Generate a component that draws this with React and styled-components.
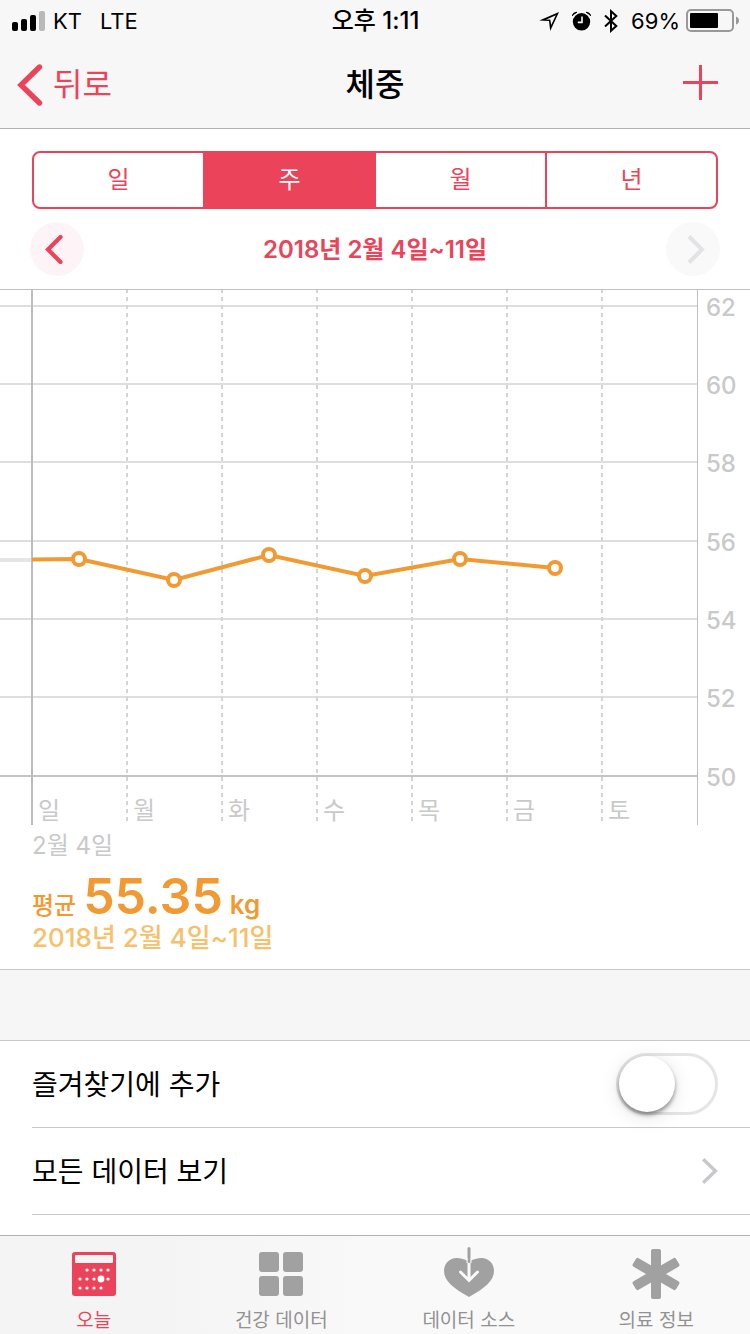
import React, { useState } from "react";
import styled, { createGlobalStyle, css } from "styled-components";

const PINK = "#eb445a";
const ORANGE = "#f19a33";
const ORANGE_LIGHT = "#f6c06c";
const GRAY = "#a1a1a1";
const LABEL = "#c9c9c9";
const LINE = "#c8c7cc";

const GlobalStyle = createGlobalStyle`
  *, *::before, *::after { box-sizing: border-box; }
  body {
    margin: 0;
    background: #fff;
    color: #000;
    font-family: Inter, "Noto Sans CJK KR", sans-serif;
  }
  button { font-family: inherit; border: 0; padding: 0; background: none; cursor: pointer; }
  svg { display: block; flex: none; }
`;

const Screen = styled.div`
  display: flex;
  flex-direction: column;
  min-height: 100vh;
`;

const Header = styled.header`
  background: #f7f7f7;
  border-bottom: 1px solid #b2b2b2;
`;

const StatusBar = styled.div`
  display: grid;
  grid-template-columns: 1fr auto 1fr;
  align-items: center;
  height: 41px;
  padding: 0 11px 0 12px;
  font-size: 22px;
  line-height: 32px;
`;

const StatusGroup = styled.div`
  display: flex;
  align-items: center;
  justify-content: ${(p) => (p.$end ? "flex-end" : "flex-start")};
  gap: ${(p) => (p.$end ? "13px" : "8px")};
`;

const Network = styled.span`
  margin-left: 10px;
`;

const BatteryStatus = styled.span`
  display: flex;
  align-items: center;
  gap: 6px;
`;

const Clock = styled.time`
  font-weight: 500;
  font-size: 24px;
`;

const NavBar = styled.nav`
  display: grid;
  grid-template-columns: 1fr auto 1fr;
  align-items: center;
  height: 87px;
  padding: 0 17px;
`;

const BackButton = styled.button`
  display: flex;
  align-items: center;
  justify-self: start;
  gap: 10px;
  color: ${PINK};
  font-size: 32px;
  line-height: 40px;
`;

const AddButton = styled.button`
  justify-self: end;
  padding: 0 15px 4px;
  color: ${PINK};
`;

const Title = styled.h1`
  margin: 0;
  font-size: 32px;
  font-weight: 500;
  line-height: 40px;
`;

const Main = styled.main`
  flex: 1;
`;

const Controls = styled.section`
  padding: 22px 30px 13px;
`;

const Segmented = styled.div`
  display: flex;
  height: 58px;
  margin: 0 2px 13px;
  border: 2px solid ${PINK};
  border-radius: 8px;
  overflow: hidden;
`;

const Segment = styled.button`
  flex: 1;
  color: ${PINK};
  font-size: 24px;
  line-height: 32px;
  & + & { border-left: 2px solid ${PINK}; }
  ${(p) => p.$active && css`
    background: ${PINK};
    color: #fff;
  `}
`;

const DateNav = styled.div`
  display: flex;
  align-items: center;
  justify-content: space-between;
`;

const RoundButton = styled.button`
  display: flex;
  align-items: center;
  justify-content: center;
  width: 54px;
  height: 54px;
  border-radius: 50%;
  background: ${(p) => (p.disabled ? "#f9f9f9" : "#fef4f7")};
  color: ${(p) => (p.disabled ? "#e3e3e6" : PINK)};
`;

const DateRange = styled.h2`
  margin: 0;
  padding-top: 2px;
  color: ${PINK};
  font-size: 24px;
  font-weight: 600;
  line-height: 32px;
`;

const Plot = styled.svg`
  width: 100%;
  height: auto;
  font-size: 24px;
`;

const AxisLabel = styled.text`
  fill: ${LABEL};
  font-weight: ${(p) => (p.$value ? 500 : 400)};
`;

const Summary = styled.section`
  padding: 5px 32px 15px;
  border-bottom: 1px solid ${LINE};
`;

const StartDate = styled.p`
  margin: 0;
  color: ${LABEL};
  font-size: 24px;
  line-height: 32px;
`;

const Average = styled.p`
  display: flex;
  align-items: baseline;
  gap: 7px;
  margin: 8px 0 0;
  color: ${ORANGE};
  font-size: 24px;
  font-weight: 500;
  line-height: 32px;
`;

const AverageValue = styled.span`
  font-size: 50px;
  font-weight: 600;
  line-height: 52px;
`;

const Unit = styled.span`
  font-size: 26px;
  font-weight: 600;
`;

const AverageRange = styled.p`
  margin: 0;
  color: ${ORANGE_LIGHT};
  font-size: 26px;
  font-weight: 500;
  line-height: 32px;
`;

const SectionGap = styled.div`
  height: 71px;
  border-bottom: 1px solid ${LINE};
  background: #f6f6f6;
`;

const Options = styled.ul`
  margin: 0;
  padding: 0 0 0 32px;
  list-style: none;
`;

const Option = styled.li`
  border-bottom: 1px solid ${LINE};
  font-size: 28px;
  line-height: 40px;
`;

const rowLayout = css`
  display: flex;
  align-items: center;
  justify-content: space-between;
  height: 86px;
  padding-right: 32px;
`;

const OptionLabel = styled.label`
  ${rowLayout}
`;

const OptionLink = styled.a`
  ${rowLayout}
  color: inherit;
  text-decoration: none;
`;

const OptionText = styled.span`
  padding-top: 2px;
`;

const Switch = styled.input`
  appearance: none;
  width: 102px;
  height: 62px;
  margin: 0;
  border: 3px solid #e5e5e5;
  border-radius: 31px;
  background: #fff;
  &::before {
    content: "";
    display: block;
    width: 56px;
    height: 56px;
    border-radius: 50%;
    background: #fff;
    box-shadow: 0 3px 4px rgba(0, 0, 0, 0.4), 0 4px 20px rgba(0, 0, 0, 0.12);
  }
  &:checked { background: #4cd964; border-color: #4cd964; }
  &:checked::before { margin-left: 40px; }
`;

const TabBar = styled.nav`
  position: sticky;
  bottom: 0;
  display: grid;
  grid-template-columns: repeat(4, 1fr);
  height: 99px;
  border-top: 1px solid #b2b2b2;
  background: linear-gradient(90deg, #f4f4f4 0 20%, #f9f9f9 50%);
`;

const Tab = styled.a`
  display: flex;
  flex-direction: column;
  align-items: center;
  gap: 8px;
  padding-top: 11px;
  color: ${(p) => (p.$active ? PINK : GRAY)};
  font-size: 19px;
  line-height: 24px;
  text-decoration: none;
`;

const TabLabel = styled.span`
  color: ${(p) => (p.$active ? PINK : "#929292")};
`;

const SignalIcon = () => (
  <svg width="33" height="20" viewBox="0 0 33 20" aria-hidden="true">
    <rect x="0" y="11" width="6" height="9" rx="2" />
    <rect x="9" y="8" width="6" height="12" rx="2" />
    <rect x="18" y="4" width="6" height="16" rx="2" />
    <rect x="27" y="0" width="6" height="20" rx="2" fill="#b9b9b9" />
  </svg>
);

const LocationIcon = () => (
  <svg width="20" height="20" viewBox="0 0 20 20" aria-hidden="true">
    <path d="M0.3 9.4 L20 1 L11.2 20 L10 10 Z M6.8 8.7 L11.3 8.6 L12.2 14 L16.8 4.3 Z" fillRule="evenodd" />
  </svg>
);

const AlarmIcon = () => (
  <svg width="19" height="20" viewBox="0 0 19 20" aria-hidden="true">
    <circle cx="9.5" cy="10.8" r="8.7" />
    <path d="M0.2 4.8 Q1 1.4 5 1.2 Q2.6 2.4 0.2 4.8 Z M18.8 4.8 Q18 1.4 14 1.2 Q16.4 2.4 18.8 4.8 Z" stroke="#000" />
    <path d="M10 5.5 V11.4 H5.8" fill="none" stroke="#f7f7f7" strokeWidth="1.6" />
  </svg>
);

const BluetoothIcon = () => (
  <svg width="14" height="24" viewBox="0 0 14 24" aria-hidden="true">
    <path d="M1 6.5 L12.3 17 L7 21.8 V2.2 L12.3 7 L1 17.5" fill="none" stroke="#000" strokeWidth="2" />
  </svg>
);

const BatteryIcon = () => (
  <svg width="53" height="23" viewBox="0 0 53 23" aria-hidden="true">
    <rect x="1" y="1" width="46" height="21" rx="4" fill="none" stroke="#999" strokeWidth="2" />
    <rect x="4" y="4" width="28" height="15" rx="1" />
    <path d="M50 7.5 Q53 8.5 53 11.5 Q53 14.5 50 15.5 Z" fill="#999" />
  </svg>
);

const BackIcon = () => (
  <svg width="26" height="42" viewBox="0 0 26 42" aria-hidden="true">
    <path d="M22.5 3 L4 21 L22.5 39" fill="none" stroke="currentColor" strokeWidth="5.4" strokeLinecap="round" />
  </svg>
);

const PlusIcon = () => (
  <svg width="35" height="35" viewBox="0 0 35 35" aria-hidden="true">
    <path d="M17.5 0 V35 M0 17.5 H35" stroke="currentColor" strokeWidth="3" />
  </svg>
);

const PreviousIcon = () => (
  <svg width="30" height="30" viewBox="0 0 30 30" aria-hidden="true">
    <path d="M18.5 3 L6 15.5 L18.5 28" fill="none" stroke="currentColor" strokeWidth="4.2" strokeLinecap="round" />
  </svg>
);

const NextIcon = () => (
  <svg width="30" height="30" viewBox="0 0 30 30" aria-hidden="true">
    <path d="M11 2.5 L24 15.5 L11 28.5" fill="none" stroke="currentColor" strokeWidth="4" />
  </svg>
);

const DisclosureIcon = () => (
  <svg width="16" height="26" viewBox="0 0 16 26" aria-hidden="true">
    <path d="M1.2 1.2 L13.4 13 L1.2 24.8" fill="none" stroke="#c7c7cc" strokeWidth="3.4" />
  </svg>
);

const CALENDAR_DOTS = [
  { y: 23, xs: [20, 27, 34, 41] },
  { y: 32, xs: [13, 20, 27, 41] },
  { y: 41, xs: [13, 20, 27, 34] },
];

const CalendarIcon = () => (
  <svg width="54" height="54" viewBox="0 0 54 54" aria-hidden="true">
    <rect x="5" y="5" width="44" height="44" rx="3" fill="currentColor" />
    <rect x="8" y="8" width="38" height="8" rx="1" fill="#f4f4f4" />
    <g fill="#fff">
      {CALENDAR_DOTS.map(({ y, xs }) =>
        xs.map((x) => <circle key={`${x}-${y}`} cx={x} cy={y} r="1.6" />)
      )}
      <circle cx="34" cy="32" r="3.4" />
    </g>
  </svg>
);

const GridIcon = () => (
  <svg width="54" height="54" viewBox="0 0 54 54" fill="currentColor" aria-hidden="true">
    <rect x="5" y="5" width="20" height="20" rx="3" />
    <rect x="29" y="5" width="20" height="20" rx="3" />
    <rect x="5" y="29" width="20" height="20" rx="3" />
    <rect x="29" y="29" width="20" height="20" rx="3" />
  </svg>
);

const HeartIcon = () => (
  <svg width="54" height="54" viewBox="0 0 54 54" aria-hidden="true">
    <path
      d="M27 15 C23 12 18.5 11 14.5 11 C7.5 11 2 16.5 2 24 C2 33.5 11.5 41.5 27 50 C42.5 41.5 52 33.5 52 24 C52 16.5 46.5 11 39.5 11 C35.5 11 31 12 27 15 Z"
      fill="currentColor"
    />
    <path d="M27 13 V33 M18.5 25 L27 33.5 L35.5 25" fill="none" stroke="#f9f9f9" strokeWidth="3" strokeLinecap="round" />
    <path d="M27 1.5 V14.5" stroke="currentColor" strokeWidth="3" strokeLinecap="round" />
    <path d="M25 11 V16 M29 11 V16" stroke="#f9f9f9" strokeWidth="1" />
  </svg>
);

const AsteriskIcon = () => (
  <svg width="54" height="54" viewBox="0 0 54 54" fill="currentColor" aria-hidden="true">
    {[0, 60, 120].map((angle) => (
      <rect key={angle} x="22" y="2" width="10" height="50" rx="2" transform={`rotate(${angle} 27 27)`} />
    ))}
  </svg>
);

const DAYS = ["일", "월", "화", "수", "목", "금", "토"];
const TICKS = [62, 60, 58, 56, 54, 52, 50];
const POINTS = [[79, 270], [174, 291], [269, 266], [365, 287], [460, 270], [555, 279]];

const tickY = (index) => Math.floor(17.3 + index * 78.3);

const WeightChart = () => (
  <Plot viewBox="0 0 750 536" role="img" aria-label="체중">
    {TICKS.map((tick, i) => (
      <g key={tick}>
        <rect x="0" y={tickY(i) - 1} width="697" height="2" fill={tick === 50 ? "#c4c4c4" : "#dedede"} />
        <AxisLabel $value x="706" y={tickY(i) + 10}>{tick}</AxisLabel>
      </g>
    ))}
    {DAYS.map((day, i) => (
      <g key={day}>
        {i > 0 && (
          <path d={`M${32 + i * 95} 0 V533`} stroke="#d4d4d4" strokeWidth="2" strokeDasharray="4 4" />
        )}
        <AxisLabel x={38 + i * 95} y="530">{day}</AxisLabel>
      </g>
    ))}
    <rect x="0" y="0" width="750" height="1" fill="#c0c0c0" />
    <rect x="697" y="0" width="1" height="536" fill="#c0c0c0" />
    <path d="M0 271 H32" stroke="#e6e6e6" strokeWidth="4" />
    <rect x="31" y="1" width="2" height="535" fill="#bcbcbc" />
    <polyline
      points={`32,270.5 ${POINTS.map((p) => p.join(",")).join(" ")}`}
      fill="none"
      stroke={ORANGE}
      strokeWidth="4"
    />
    {POINTS.map(([x, y]) => (
      <circle key={x} cx={x} cy={y} r="6" fill="#fff" stroke={ORANGE} strokeWidth="4" />
    ))}
  </Plot>
);

const PERIODS = ["일", "주", "월", "년"];

const TABS = [
  { label: "오늘", Icon: CalendarIcon },
  { label: "건강 데이터", Icon: GridIcon },
  { label: "데이터 소스", Icon: HeartIcon },
  { label: "의료 정보", Icon: AsteriskIcon },
];

export default function App() {
  const [period, setPeriod] = useState("주");

  return (
    <Screen>
      <GlobalStyle />
      <Header>
        <StatusBar>
          <StatusGroup>
            <SignalIcon />
            <span>KT</span>
            <Network>LTE</Network>
          </StatusGroup>
          <Clock>오후 1:11</Clock>
          <StatusGroup $end>
            <LocationIcon />
            <AlarmIcon />
            <BluetoothIcon />
            <BatteryStatus>
              69%
              <BatteryIcon />
            </BatteryStatus>
          </StatusGroup>
        </StatusBar>
        <NavBar>
          <BackButton type="button">
            <BackIcon />
            뒤로
          </BackButton>
          <Title>체중</Title>
          <AddButton type="button" aria-label="추가">
            <PlusIcon />
          </AddButton>
        </NavBar>
      </Header>

      <Main>
        <Controls>
          <Segmented>
            {PERIODS.map((name) => (
              <Segment
                key={name}
                type="button"
                $active={name === period}
                aria-pressed={name === period}
                onClick={() => setPeriod(name)}
              >
                {name}
              </Segment>
            ))}
          </Segmented>
          <DateNav>
            <RoundButton type="button" aria-label="이전">
              <PreviousIcon />
            </RoundButton>
            <DateRange>2018년 2월 4일~11일</DateRange>
            <RoundButton type="button" aria-label="다음" disabled>
              <NextIcon />
            </RoundButton>
          </DateNav>
        </Controls>

        <WeightChart />

        <Summary>
          <StartDate>2월 4일</StartDate>
          <Average>
            평균
            <AverageValue>55.35</AverageValue>
            <Unit>kg</Unit>
          </Average>
          <AverageRange>2018년 2월 4일~11일</AverageRange>
        </Summary>

        <SectionGap />

        <Options>
          <Option>
            <OptionLabel>
              <OptionText>즐겨찾기에 추가</OptionText>
              <Switch type="checkbox" role="switch" />
            </OptionLabel>
          </Option>
          <Option>
            <OptionLink href="#all-data">
              <OptionText>모든 데이터 보기</OptionText>
              <DisclosureIcon />
            </OptionLink>
          </Option>
        </Options>
      </Main>

      <TabBar>
        {TABS.map(({ label, Icon }, i) => (
          <Tab key={label} href={`#tab-${i}`} $active={i === 0}>
            <Icon />
            <TabLabel $active={i === 0}>{label}</TabLabel>
          </Tab>
        ))}
      </TabBar>
    </Screen>
  );
}
